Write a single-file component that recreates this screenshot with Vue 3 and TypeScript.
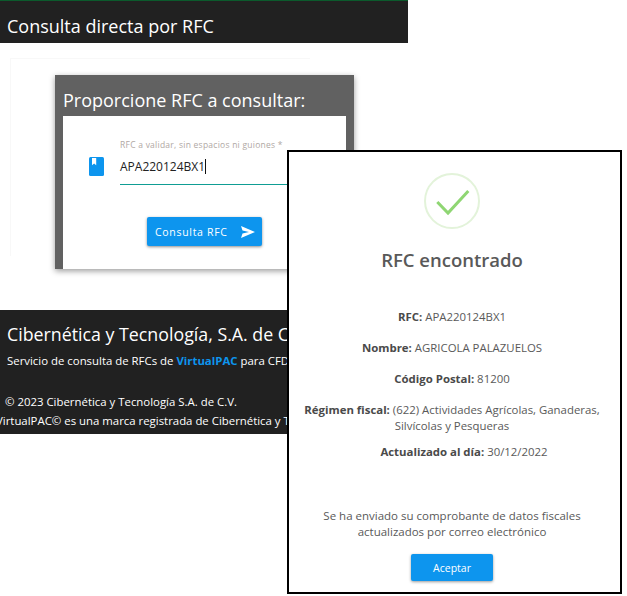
<template>
  <div class="page">
    <header class="top-bar">
      <h1>Consulta directa por RFC</h1>
    </header>

    <main class="content">
      <section class="panel">
        <h2>Proporcione RFC a consultar:</h2>
        <form class="panel-body" @submit.prevent>
          <div class="field-row">
            <span class="field-icon">
              <svg width="15" height="19" viewBox="0 0 15 19">
                <rect width="15" height="19" rx="1.5" fill="#0d95ee" />
                <path d="M3 1h4.2v7.2L5.1 6.5 3 8.2z" fill="#fff" />
              </svg>
            </span>
            <label class="field">
              <span class="field-label">RFC a validar, sin espacios ni guiones *</span>
              <span class="field-value">{{ rfc }}<i class="caret"></i></span>
            </label>
          </div>
          <button class="btn-send" type="button">
            Consulta RFC
            <svg width="14" height="12" viewBox="0 0 14 12">
              <path d="M0 0l14 6-14 6 1.5-4.6L8 6 1.5 4.6z" fill="#fff" />
            </svg>
          </button>
        </form>
      </section>
    </main>

    <footer class="bottom-bar">
      <h3>Cibernética y Tecnología, S.A. de C.V.</h3>
      <p class="service">Servicio de consulta de RFCs de <b>VirtualPAC</b> para CFDI 4.0</p>
      <p class="legal">© 2023 Cibernética y Tecnología S.A. de C.V.</p>
      <p class="legal mark">VirtualPAC© es una marca registrada de Cibernética y Tecnología</p>
    </footer>

    <div class="dialog">
      <svg class="ok-icon" width="58" height="58" viewBox="0 0 58 58">
        <circle cx="29" cy="29" r="27" fill="none" stroke="#e3f3da" stroke-width="2" />
        <path d="M14.3 30L25 41 45.3 19" fill="none" stroke="#8fd673" stroke-width="3" />
      </svg>
      <h4>RFC encontrado</h4>
      <div class="details">
        <p v-for="row in details" :key="row.label"><b>{{ row.label }}:</b> {{ row.value }}</p>
      </div>
      <p class="notice">Se ha enviado su comprobante de datos fiscales<br />actualizados por correo electrónico</p>
      <button class="btn-ok" type="button">Aceptar</button>
    </div>
  </div>
</template>

<script setup lang="ts">
const rfc = 'APA220124BX1'

const details = [
  { label: 'RFC', value: rfc },
  { label: 'Nombre', value: 'AGRICOLA PALAZUELOS' },
  { label: 'Código Postal', value: '81200' },
  { label: 'Régimen fiscal', value: '(622) Actividades Agrícolas, Ganaderas, Silvícolas y Pesqueras' },
  { label: 'Actualizado al día', value: '30/12/2022' }
]
</script>

<style>
html,
body {
  background: #fff;
}
</style>

<style scoped>
.page {
  position: relative;
  width: 627px;
  height: 596px;
  overflow: hidden;
  font-family: "Open Sans", "Noto Sans", sans-serif;
}

.top-bar {
  width: 408px;
  height: 43px;
  box-sizing: border-box;
  background: #212121;
  border-top: 1px solid #0b5a2c;
  padding: 11px 7px 0;
}

.top-bar h1 {
  margin: 0;
  font-size: 18px;
  font-weight: 400;
  line-height: 28px;
  color: #fff;
}

.content {
  width: 300px;
  height: 198px;
  box-sizing: border-box;
  margin: 15px 0 0 10px;
  padding: 16px 0 0 44px;
  border-top: 1px solid #f8f8f8;
  border-left: 1px solid #f8f8f8;
}

.panel {
  width: 299px;
  height: 194px;
  background: #616161;
  box-shadow: 0 2px 6px rgba(0, 0, 0, 0.4);
  display: flex;
  flex-direction: column;
}

.panel h2 {
  margin: 0;
  padding: 12px 8px 0;
  height: 41px;
  box-sizing: border-box;
  font-size: 18px;
  font-weight: 400;
  line-height: 26px;
  color: #fff;
  white-space: nowrap;
}

.panel-body {
  flex: 1;
  margin: 0 8px;
  background: #fff;
  display: flex;
  flex-direction: column;
}

.field-row {
  display: flex;
  padding-top: 24px;
}

.field-icon {
  width: 57px;
  padding: 17px 0 0 26px;
  box-sizing: border-box;
}

.field {
  flex: 1;
  display: flex;
  flex-direction: column;
  height: 44px;
  border-bottom: 1px solid #0f9d94;
}

.field-label {
  font-size: 8.5px;
  line-height: 10px;
  letter-spacing: 0.25px;
  color: #b0a8a4;
  white-space: nowrap;
}

.field-value {
  margin-top: 8px;
  font-size: 12px;
  line-height: 18px;
  color: #222;
}

.caret {
  display: inline-block;
  width: 1px;
  height: 15px;
  background: #111;
  vertical-align: -3px;
}

.btn-send {
  align-self: flex-start;
  margin: 32px 0 0 84px;
  width: 115px;
  height: 29px;
  border: 0;
  border-radius: 2px;
  padding: 0 7px 0 8px;
  background: #0d95ee;
  box-shadow: 0 1px 3px rgba(0, 0, 0, 0.45);
  color: #fff;
  font: 400 10.5px "Open Sans", sans-serif;
  letter-spacing: 0.7px;
  display: flex;
  align-items: center;
  justify-content: space-between;
}

.bottom-bar {
  width: 408px;
  height: 124px;
  margin-top: 54px;
  background: #212121;
  color: #fff;
  overflow: hidden;
  white-space: nowrap;
  box-sizing: border-box;
  padding-top: 12px;
}

.bottom-bar h3 {
  margin: 0 0 0 7px;
  font-size: 17.8px;
  font-weight: 400;
  line-height: 24px;
}

.service {
  margin: 7px 0 0 7px;
  font-size: 11.4px;
  line-height: 16px;
}

.service b {
  color: #0d95ee;
}

.legal {
  margin: 0;
  font-size: 11.4px;
  line-height: 16px;
}

.service + .legal {
  margin: 25px 0 0 5px;
}

.legal.mark {
  margin: 3px 0 0 -4px;
}

.dialog {
  position: absolute;
  left: 287px;
  top: 150px;
  width: 335px;
  height: 444px;
  box-sizing: border-box;
  border: 2px solid #000;
  padding-right: 5px;
  background: #fff;
  text-align: center;
  color: #595959;
}

.ok-icon {
  display: block;
  margin: 20px auto 0;
}

.dialog h4 {
  margin: 17px 0 0;
  font-size: 18.5px;
  font-weight: 600;
  line-height: 26px;
}

.details {
  margin-top: 36px;
  font-size: 11.4px;
  line-height: 16px;
  padding: 0 10px;
}

.details p {
  margin: 0 0 15px;
}

.details p:nth-child(4) {
  margin-bottom: 10px;
}

.details p:last-child {
  margin: 0 0 0 24px;
}

.details b {
  color: #4a4a4a;
}

.notice {
  margin: 48px 0 0;
  font-size: 11.5px;
  line-height: 16px;
}

.btn-ok {
  display: block;
  margin: 14px auto 0;
  width: 82px;
  height: 27px;
  border: 0;
  border-radius: 2px;
  background: #0d95ee;
  box-shadow: 0 1px 3px rgba(0, 0, 0, 0.4);
  color: #fff;
  font: 400 10.5px "Open Sans", sans-serif;
}
</style>
